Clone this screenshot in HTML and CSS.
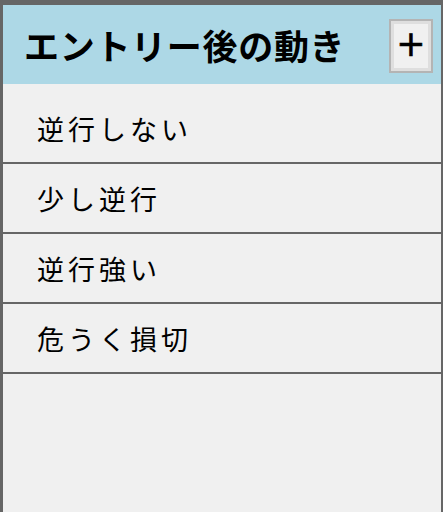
FILE: index.html
```html
<!DOCTYPE html>
<html lang="ja">
<head>
<meta charset="utf-8">
<link rel="stylesheet" href="styles.css">
</head>
<body>
<div class="panel">
  <div class="header">
    <span class="title">エントリー後の動き</span>
    <button class="add">+</button>
  </div>
  <ul class="list">
    <li class="item">逆行しない</li>
    <li class="item">少し逆行</li>
    <li class="item">逆行強い</li>
    <li class="item">危うく損切</li>
  </ul>
</div>
</body>
</html>
```
FILE: styles.css
```css
html, body {
  margin: 0;
  padding: 0;
  background: #f0f0f0;
}
.panel {
  box-sizing: border-box;
  height: 512px;
  border-top: 5px solid #666666;
  border-left: 3px solid #666666;
  border-right: 2px solid #666666;
  background: #f0f0f0;
  font-family: "Noto Sans CJK JP", sans-serif;
}
.header {
  height: 79px;
  background: #add8e6;
  display: flex;
  align-items: center;
  justify-content: space-between;
  padding: 0 8px 0 21px;
}
.title {
  font-size: 35px;
  font-weight: bold;
  color: #000;
  letter-spacing: 0.7px;
}
.add {
  box-sizing: border-box;
  width: 44px;
  height: 54px;
  margin-top: 3px;
  border: 2px solid #b4b4b4;
  box-shadow: inset 0 0 0 3px #dedede;
  background: #f0f0f0;
  font-family: "DejaVu Sans", sans-serif;
  font-size: 35px;
  line-height: 1;
  padding: 0 0 3px 0;
  color: #000;
  -webkit-text-stroke: 0.6px #000;
  display: flex;
  align-items: center;
  justify-content: center;
}
.list {
  list-style: none;
  margin: 0;
  padding: 10px 0 0 0;
}
.item {
  box-sizing: border-box;
  height: 70px;
  border-bottom: 2px solid #666666;
  display: flex;
  align-items: center;
  padding-left: 34px;
  font-size: 27px;
  letter-spacing: 4px;
  color: #000;
}
```
